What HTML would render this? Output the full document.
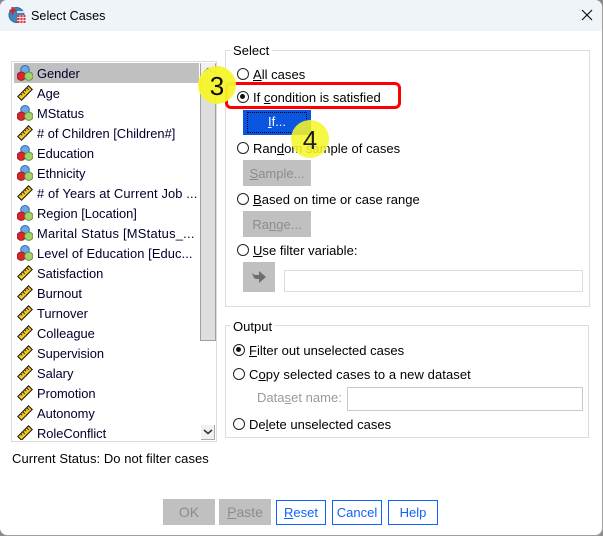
<!DOCTYPE html>
<html><head><meta charset="utf-8"><style>
html,body{margin:0;padding:0;width:603px;height:536px;overflow:hidden;background:#8a8a8a}
*{box-sizing:border-box}
#w{position:absolute;left:0;top:0;width:602px;height:535px;background:#fff;border-radius:7px;overflow:hidden;box-shadow:1px 1px 0 #a0a0a0;font:13px "Liberation Sans",sans-serif;color:#000}
.a{position:absolute}
.t{position:absolute;white-space:nowrap;line-height:16px;letter-spacing:.02px}
.row{position:absolute;left:37px;white-space:nowrap;line-height:21px;height:20px;letter-spacing:-.03px;color:#00002a;font-size:12.9px}
.ic{position:absolute;left:17px}
.r{position:absolute;width:12px;height:12px;border:1.4px solid #222;border-radius:50%;background:#fff}
.r.on::after{content:"";position:absolute;left:2.1px;top:2.1px;width:5px;height:5px;background:#111;border-radius:50%}
.g{position:absolute;border:1px solid #dcdcdc}
.d{position:absolute;background:#c0c0c0;color:#8c8c8c;text-align:center}
.b{position:absolute;top:500px;height:25px;width:50px;border:1.3px solid #0f62fe;color:#0f62fe;text-align:center;line-height:23px;background:#fff}
.c{position:absolute;border-radius:50%;background:#f6f62c;text-align:center;font-size:26px;color:#000}
</style></head><body>
<svg width="0" height="0" style="position:absolute"><defs>
<symbol id="n" viewBox="0 0 16 16"><circle cx="8" cy="4.8" r="4.3" fill="#6ea6e4" stroke="#2f6cb4"/><circle cx="4.3" cy="11.2" r="4.2" fill="#d9262e" stroke="#9c1a20"/><circle cx="11.8" cy="11.2" r="4.2" fill="#a4d070" stroke="#5f9438"/></symbol>
<symbol id="s" viewBox="0 0 16 16"><path d="M.8 11.5 11.5.8 15.2 4.5 4.5 15.2Z" fill="#f7c81e" stroke="#222" stroke-width="1.1"/><path d="M3.6 8.7l1.6 1.6M5.6 6.7l2.2 2.2M7.6 4.7l1.6 1.6M9.6 2.7l2.2 2.2" stroke="#222" stroke-width=".9"/></symbol>
</defs></svg>
<div id="w">
<div class="a" style="left:0;top:0;width:602px;height:31px;background:#eff4f9"></div>
<svg class="a" style="left:8px;top:6px" width="18" height="18" viewBox="0 0 18 18"><circle cx="8.5" cy="9" r="7.5" fill="#3d85bd" stroke="#2a6a9c"/><rect x="9" y="9" width="8.5" height="8" fill="#d8383f"/><path d="M9 11.5h8.5M9 14.5h8.5M12 9v8M15 9v8" stroke="#fff" stroke-width=".8"/><path d="M1.5 4.5h7M4.5 1v7.5" stroke="#d8202a" stroke-width="2"/><rect x="9" y="5" width="7" height="2" fill="#cfe2f0"/></svg>
<div class="t" style="left:31px;top:8px;font-size:12.6px">Select Cases</div>
<svg class="a" style="left:581px;top:9px" width="12" height="12" viewBox="0 0 12 12"><path d="M1 1l10 10M11 1 1 11" stroke="#111" stroke-width="1.2"/></svg>

<div class="a" style="left:11px;top:61px;width:206px;height:381px;border:1px solid #dadada"></div>
<div class="a" style="left:14px;top:63px;width:185px;height:20px;background:#c0c0c0"></div>
<div class="a" style="left:200px;top:63px;width:16px;height:278px;background:#dedede;border:1px solid #a0a0a0;border-top-color:#dedede"></div>
<div class="a" style="left:201px;top:63px;width:14px;height:16px;background:#f0f0f0"></div>
<svg class="a" style="left:203px;top:67px" width="10" height="6"><path d="M1 5l4-3.5L9 5" fill="none" stroke="#444" stroke-width="1.3"/></svg>
<div class="a" style="left:201px;top:425px;width:14px;height:15px;background:#f0f0f0;border-right:1px solid #aaa;border-bottom:1px solid #aaa"></div>
<svg class="a" style="left:203px;top:429px" width="10" height="6"><path d="M1 1l4 3.5L9 1" fill="none" stroke="#333" stroke-width="1.5"/></svg>

<div class="a" style="left:14px;top:63px;width:185px;height:377px;overflow:hidden">
<div style="position:absolute;left:-14px;top:-63px;width:300px;height:500px">
<svg class="ic" style="top:65px" width="16" height="16"><use href="#n"/></svg><div class="row" style="top:63px">Gender</div>
<svg class="ic" style="top:85px" width="16" height="16"><use href="#s"/></svg><div class="row" style="top:83px">Age</div>
<svg class="ic" style="top:105px" width="16" height="16"><use href="#n"/></svg><div class="row" style="top:103px">MStatus</div>
<svg class="ic" style="top:125px" width="16" height="16"><use href="#s"/></svg><div class="row" style="top:123px"># of Children [Children#]</div>
<svg class="ic" style="top:145px" width="16" height="16"><use href="#n"/></svg><div class="row" style="top:143px">Education</div>
<svg class="ic" style="top:165px" width="16" height="16"><use href="#n"/></svg><div class="row" style="top:163px">Ethnicity</div>
<svg class="ic" style="top:185px" width="16" height="16"><use href="#s"/></svg><div class="row" style="top:183px;letter-spacing:.12px"># of Years at Current Job ...</div>
<svg class="ic" style="top:205px" width="16" height="16"><use href="#n"/></svg><div class="row" style="top:203px">Region [Location]</div>
<svg class="ic" style="top:225px" width="16" height="16"><use href="#n"/></svg><div class="row" style="top:223px;letter-spacing:.24px">Marital Status [MStatus_...</div>
<svg class="ic" style="top:245px" width="16" height="16"><use href="#n"/></svg><div class="row" style="top:243px;letter-spacing:.08px">Level of Education [Educ...</div>
<svg class="ic" style="top:265px" width="16" height="16"><use href="#s"/></svg><div class="row" style="top:263px">Satisfaction</div>
<svg class="ic" style="top:285px" width="16" height="16"><use href="#s"/></svg><div class="row" style="top:283px">Burnout</div>
<svg class="ic" style="top:305px" width="16" height="16"><use href="#s"/></svg><div class="row" style="top:303px">Turnover</div>
<svg class="ic" style="top:325px" width="16" height="16"><use href="#s"/></svg><div class="row" style="top:323px">Colleague</div>
<svg class="ic" style="top:345px" width="16" height="16"><use href="#s"/></svg><div class="row" style="top:343px">Supervision</div>
<svg class="ic" style="top:365px" width="16" height="16"><use href="#s"/></svg><div class="row" style="top:363px">Salary</div>
<svg class="ic" style="top:385px" width="16" height="16"><use href="#s"/></svg><div class="row" style="top:383px">Promotion</div>
<svg class="ic" style="top:405px" width="16" height="16"><use href="#s"/></svg><div class="row" style="top:403px">Autonomy</div>
<svg class="ic" style="top:425px" width="16" height="16"><use href="#s"/></svg><div class="row" style="top:423px">RoleConflict</div>
</div></div>

<div class="t" style="left:12px;top:451px;letter-spacing:.05px">Current Status: Do not filter cases</div>

<div class="g" style="left:225px;top:50px;width:365px;height:257px"></div>
<div class="t" style="left:230px;top:43px;background:#fff;padding:0 3px">Select</div>
<div class="r" style="left:237px;top:68px"></div>
<div class="t" style="left:253px;top:67px"><u>A</u>ll cases</div>
<div class="r on" style="left:237px;top:91px"></div>
<div class="t" style="left:253px;top:90px">If <u>c</u>ondition is satisfied</div>
<div class="a" style="left:225px;top:82px;width:176px;height:27px;border:3px solid #f00;border-radius:6px"></div>
<div class="a" style="left:243px;top:110px;width:68px;height:25px;background:#0a56e0;color:#fff;text-align:center;line-height:24px"><span style="position:absolute;left:4px;top:2px;right:4px;bottom:2px;border:1px dotted #000"></span><u>I</u>f...</div>
<div class="r" style="left:237px;top:142px"></div>
<div class="t" style="left:253px;top:141px">Ran<u>d</u>om sample of cases</div>
<div class="d" style="left:243px;top:160px;width:68px;height:26px;line-height:27px"><u>S</u>ample...</div>
<div class="r" style="left:237px;top:193px"></div>
<div class="t" style="left:253px;top:192px"><u>B</u>ased on time or case range</div>
<div class="d" style="left:243px;top:211px;width:68px;height:26px;line-height:27px">Ra<u>n</u>ge...</div>
<div class="r" style="left:237px;top:244px"></div>
<div class="t" style="left:253px;top:243px"><u>U</u>se filter variable:</div>
<div class="a" style="left:243px;top:262px;width:32px;height:30px;background:#c0c0c0"></div>
<svg class="a" style="left:251px;top:270px" width="16" height="14" viewBox="0 0 16 14"><path d="M1 3l3 2h4V1l7 6-7 6V9H5L3 8Z" fill="#6e6e6e"/></svg>
<div class="a" style="left:284px;top:270px;width:299px;height:22px;border:1px solid #dcdcdc"></div>

<div class="g" style="left:225px;top:325px;width:364px;height:113px"></div>
<div class="t" style="left:230px;top:319px;background:#fff;padding:0 3px">Output</div>
<div class="r on" style="left:233px;top:344px"></div>
<div class="t" style="left:249px;top:343px"><u>F</u>ilter out unselected cases</div>
<div class="r" style="left:233px;top:368px"></div>
<div class="t" style="left:249px;top:367px;letter-spacing:.08px">C<u>o</u>py selected cases to a new dataset</div>
<div class="t" style="left:257px;top:390px;color:#9a9a9a">Data<u>s</u>et name:</div>
<div class="a" style="left:347px;top:387px;width:236px;height:24px;border:1px solid #c8c8c8"></div>
<div class="r" style="left:233px;top:418px"></div>
<div class="t" style="left:249px;top:417px">De<u>l</u>ete unselected cases</div>

<div class="d" style="left:163px;top:499px;width:52px;height:26px;line-height:27px;font-size:14px">OK</div>
<div class="d" style="left:219px;top:499px;width:52px;height:26px;line-height:27px;font-size:14px"><u>P</u>aste</div>
<div class="b" style="left:276px"><u>R</u>eset</div>
<div class="b" style="left:332px">Cancel</div>
<div class="b" style="left:388px">Help</div>

<div class="c" style="left:198px;top:66px;width:38px;height:38px;line-height:40px;opacity:.95">3</div>
<div class="c" style="left:291px;top:120px;width:38px;height:38px;line-height:41px;opacity:.88">4</div>
</div>
</body></html>
